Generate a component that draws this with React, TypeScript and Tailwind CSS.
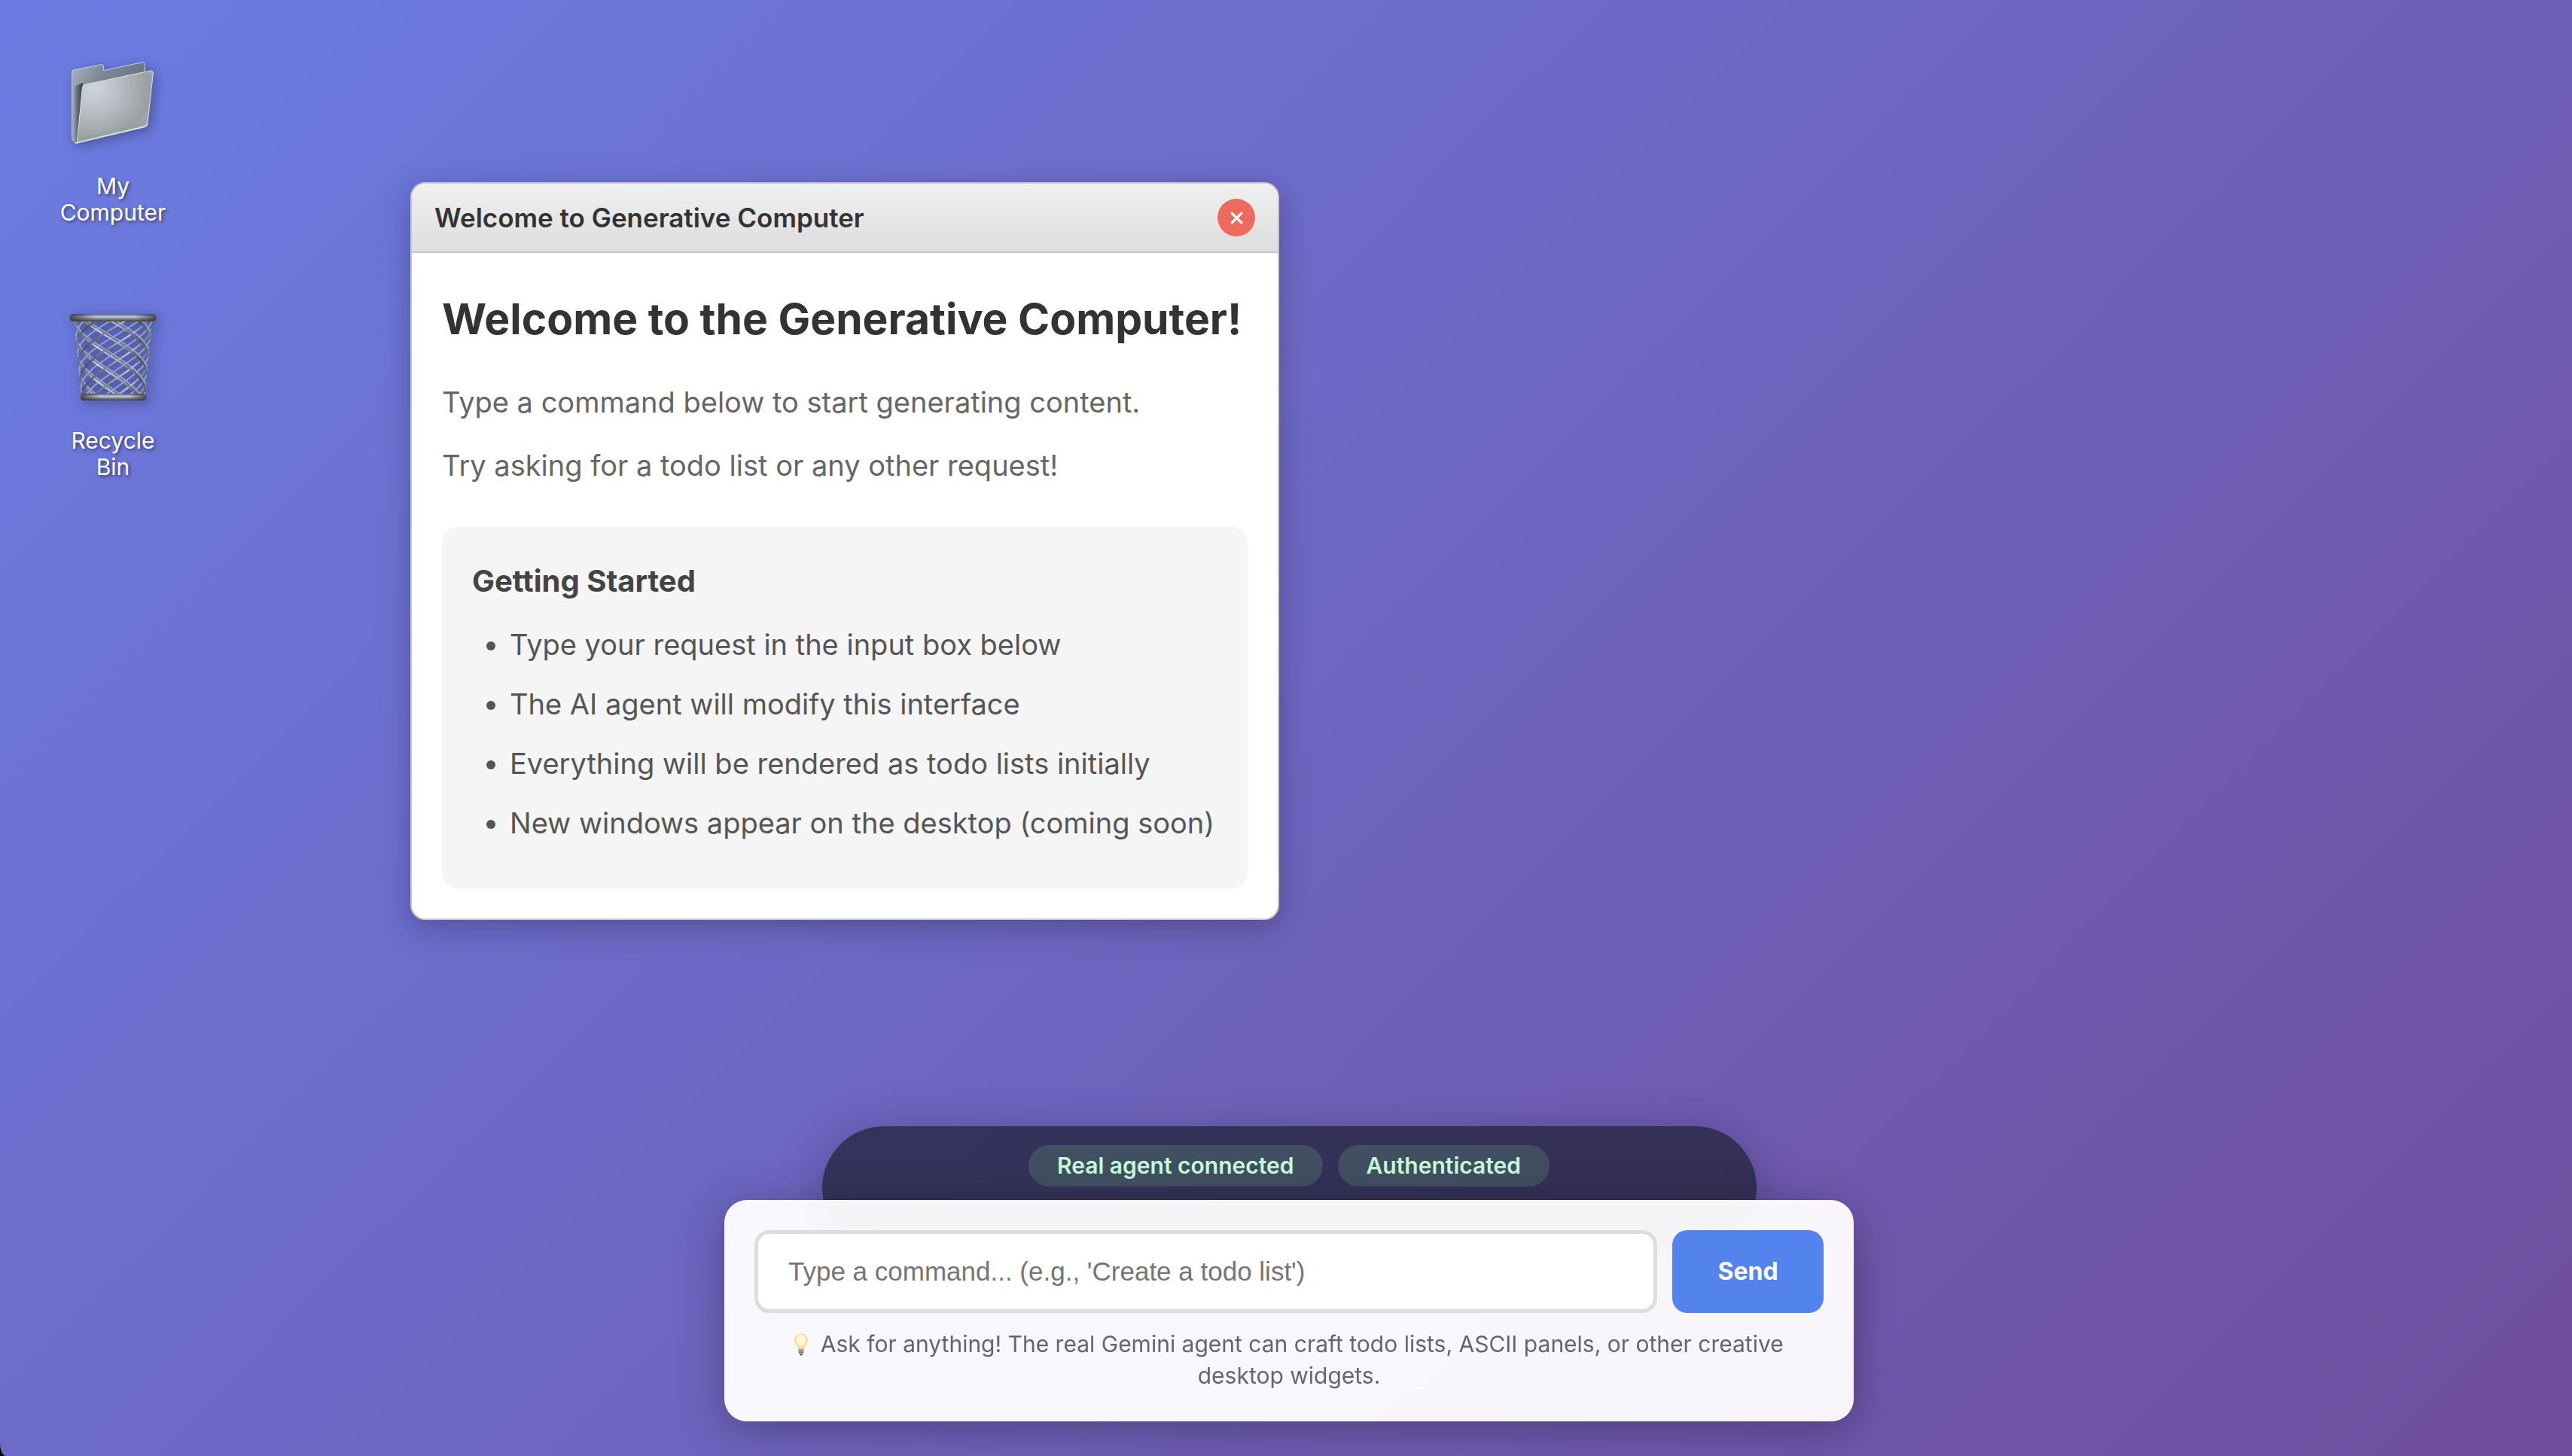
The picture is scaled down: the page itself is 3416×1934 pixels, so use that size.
import React from "react";

const tips = [
  "Type your request in the input box below",
  "The AI agent will modify this interface",
  "Everything will be rendered as todo lists initially",
  "New windows appear on the desktop (coming soon)",
];

function FolderIcon() {
  return (
    <svg viewBox="90 52 360 360" className="size-[120px] drop-shadow-[4px_4px_8px_rgba(0,0,0,0.3)]" aria-hidden="true">
      <defs>
        <linearGradient id="folder-back" x1="0" y1="0" x2="1" y2="0.6">
          <stop offset="0" stopColor="#a9b4bd" />
          <stop offset="0.35" stopColor="#7d8a96" />
          <stop offset="1" stopColor="#5d6b78" />
        </linearGradient>
        <linearGradient id="folder-fold" x1="0" y1="0" x2="1" y2="0">
          <stop offset="0" stopColor="#a5b0ba" />
          <stop offset="0.5" stopColor="#5b6772" />
          <stop offset="1" stopColor="#39434d" />
        </linearGradient>
        <radialGradient id="folder-front" cx="0.22" cy="0.25" r="0.95">
          <stop offset="0" stopColor="#d0d4de" />
          <stop offset="0.35" stopColor="#b9bec4" />
          <stop offset="0.75" stopColor="#9a9fa1" />
          <stop offset="1" stopColor="#a9acad" />
        </radialGradient>
      </defs>
      <path d="M107 108 Q107 101 114 100 L224 78 Q232 77 232 85 L233 102 L388 69 Q396 68 396 76 L398 108 L160 160 L150 280 L128 391 Q108 388 107 366 Z" fill="url(#folder-back)" stroke="#c6d0d8" strokeWidth="3" />
      <path d="M109 170 L150 150 L134 386 Q110 392 109 366 Z" fill="url(#folder-fold)" />
      <path d="M148 174 Q149 160 163 157 L421 103 Q431 102 430 114 L408 312 Q406 322 397 324 L132 388 Q127 388 128 380 Z" fill="url(#folder-front)" stroke="#dde2e8" strokeWidth="3" />
      <path d="M121 391 Q133 390 145 386 L396 327 Q405 324 407 314" fill="none" stroke="#e4e9ef" strokeWidth="4" strokeLinecap="round" />
      <path d="M140 374 L396 312" stroke="#84898b" strokeOpacity="0.5" strokeWidth="3" />
    </svg>
  );
}

// Projects one strand of the basket's mesh: a helix wound on a tapering cylinder.
function strand(turnOffset: number, direction: 1 | -1, front: boolean) {
  const top = 108;
  const bottom = 408;
  const halfTurn = 280;
  let d = "";
  let drawing = false;
  for (let y = top; y <= bottom; y += 3) {
    const t = (y - top) / (bottom - top);
    const radius = 154 - 28 * t;
    const angle = direction * ((y / halfTurn) * Math.PI + turnOffset);
    const isFront = Math.cos(angle) >= 0;
    if (isFront === front) {
      const x = 271 + radius * Math.sin(angle);
      d += `${drawing ? "L" : "M"}${x.toFixed(1)} ${y} `;
      drawing = true;
    } else {
      drawing = false;
    }
  }
  return d;
}

const strandOffsets = Array.from({ length: 8 }, (_, i) => (i * Math.PI) / 4);

function BinIcon() {
  return (
    <svg viewBox="90 78 360 360" className="size-[120px] drop-shadow-[4px_4px_8px_rgba(0,0,0,0.3)]" aria-hidden="true">
      <defs>
        <linearGradient id="bin-rim" x1="0" y1="0" x2="0" y2="1">
          <stop offset="0" stopColor="#5e6066" />
          <stop offset="0.4" stopColor="#c3cfdc" />
          <stop offset="0.6" stopColor="#8a8f98" />
          <stop offset="1" stopColor="#3f3d3f" />
        </linearGradient>
        <linearGradient id="bin-shade" x1="0" y1="0" x2="1" y2="0">
          <stop offset="0" stopColor="#3b3836" stopOpacity="0.85" />
          <stop offset="0.3" stopColor="#3b3836" stopOpacity="0" />
          <stop offset="0.75" stopColor="#3b3836" stopOpacity="0" />
          <stop offset="1" stopColor="#3b3836" stopOpacity="0.85" />
        </linearGradient>
        <linearGradient id="bin-wire" gradientUnits="userSpaceOnUse" x1="115" y1="0" x2="427" y2="0">
          <stop offset="0" stopColor="#6f86a4" />
          <stop offset="0.12" stopColor="#6f7880" />
          <stop offset="0.3" stopColor="#ccd3d6" />
          <stop offset="0.6" stopColor="#a4a7a8" />
          <stop offset="0.85" stopColor="#514d4c" />
          <stop offset="1" stopColor="#6f86a4" />
        </linearGradient>
        <linearGradient id="bin-wire-dark" gradientUnits="userSpaceOnUse" x1="115" y1="0" x2="427" y2="0">
          <stop offset="0" stopColor="#6f86a4" />
          <stop offset="0.15" stopColor="#514d4c" />
          <stop offset="0.4" stopColor="#85868a" />
          <stop offset="0.7" stopColor="#c2c8cc" />
          <stop offset="0.9" stopColor="#7b8790" />
          <stop offset="1" stopColor="#6f86a4" />
        </linearGradient>
      </defs>
      <path d="M114 108 L428 108 L398 412 L146 412 Z" fill="#4a55b0" fillOpacity="0.25" />
      <g fill="none" stroke="#94a6ba" strokeWidth="6">
        {strandOffsets.map((o) => (
          <React.Fragment key={o}>
            <path d={strand(o + 0.39, 1, false)} />
            <path d={strand(o + 0.39, -1, false)} />
          </React.Fragment>
        ))}
      </g>
      <g fill="none" strokeWidth="7">
        {strandOffsets.map((o) => (
          <React.Fragment key={o}>
            <path d={strand(o, -1, true)} stroke="url(#bin-wire-dark)" />
            <path d={strand(o + 0.25, 1, true)} stroke="url(#bin-wire)" />
          </React.Fragment>
        ))}
      </g>
      <rect x="97" y="84" width="347" height="30" rx="15" fill="url(#bin-rim)" />
      <rect x="97" y="84" width="347" height="30" rx="15" fill="url(#bin-shade)" />
      <rect x="140" y="402" width="263" height="27" rx="13" fill="url(#bin-rim)" />
      <rect x="140" y="402" width="263" height="27" rx="13" fill="url(#bin-shade)" />
    </svg>
  );
}

function BulbIcon() {
  return (
    <svg viewBox="0 0 18 30" className="mr-[8px] inline-block h-[30px] w-[18px] align-[-5px]" aria-hidden="true">
      <defs>
        <radialGradient id="bulb-glass" cx="0.5" cy="0.4" r="0.6">
          <stop offset="0" stopColor="#fffef4" />
          <stop offset="0.55" stopColor="#fdf3c0" />
          <stop offset="1" stopColor="#ecd27c" />
        </radialGradient>
      </defs>
      <path d="M9 .7C4 .7 .7 4.3 .7 9c0 4.600 4.300 7 4.800 12h7C13 16 17.300 13.600 17.300 9 17.300 4.300 14 .7 9 .7Z" fill="url(#bulb-glass)" stroke="#e6d08a" strokeWidth="0.8" />
      <path d="M5.500 21h7v5l-2 2h-3l-2-2Z" fill="#a7a39b" />
      <path d="M5.500 23.500h7M5.500 25.700h7" stroke="#77736c" strokeWidth="0.8" />
      <path d="M7 28h4l-1 1.500H8Z" fill="#3f3c39" />
    </svg>
  );
}

function DesktopIcon({ label, children }: { label: string; children: React.ReactNode }) {
  return (
    <button type="button" className="flex w-[160px] flex-col items-center gap-[33px] text-[30px] leading-[35px] text-white [text-shadow:2px_2px_4px_rgba(0,0,0,0.5)]">
      {children}
      <span className="max-w-[150px]">{label}</span>
    </button>
  );
}

function WelcomeWindow() {
  return (
    <section aria-label="Welcome to Generative Computer" className="absolute top-[242px] left-[545px] w-[1154px] overflow-hidden rounded-[20px] border-2 border-[#c8c8c8] bg-white shadow-[0_10px_40px_rgba(0,0,0,0.25)]">
      <header className="flex items-center justify-between border-b-2 border-[#c8c8c8] bg-linear-to-b from-[#f0f0f0] to-[#dedede] px-[30px] py-[20px]">
        <h2 className="text-[35px] leading-[50px] font-semibold text-[#333]">Welcome to Generative Computer</h2>
        <button type="button" aria-label="Close" className="flex size-[50px] items-center justify-center rounded-full bg-[#ed6a5e]">
          <svg viewBox="0 0 18 18" className="size-[17px]" aria-hidden="true">
            <path d="M2.500 2.500 15.500 15.500M15.500 2.500 2.500 15.500" stroke="#fff" strokeWidth="3.600" strokeLinecap="round" />
          </svg>
        </button>
      </header>
      <div className="p-[40px]">
        <h1 className="mb-[30px] text-[57px] leading-[96px] font-bold text-[#333]">Welcome to the Generative Computer!</h1>
        <p className="mb-[20px] text-[38px] leading-[64px] text-[#666]">Type a command below to start generating content.</p>
        <p className="mb-[50px] text-[38px] leading-[64px] text-[#666]">Try asking for a todo list or any other request!</p>
        <div className="rounded-[20px] bg-[#f5f5f5] p-[40px]">
          <h3 className="mb-[20px] text-[40px] leading-[64px] font-bold text-[#444]">Getting Started</h3>
          <ul className="list-disc pl-[50px] text-[38px] leading-[64px] text-[#555]">
            {tips.map((tip) => (
              <li key={tip} className="mb-[15px]">{tip}</li>
            ))}
          </ul>
        </div>
      </div>
    </section>
  );
}

function StatusBar() {
  return (
    <div className="-mb-[66px] flex h-[164px] w-[1241px] max-w-full items-start justify-center gap-[20px] rounded-full bg-[#1b1e31]/70 pt-[25px] text-[30px] leading-[55px] font-semibold text-[#c5fbd8] shadow-[0_10px_60px_rgba(0,0,0,0.25)]">
      <span className="rounded-full bg-[#80d884]/18 px-[38px]">Real agent connected</span>
      <span className="rounded-full bg-[#80d884]/18 px-[38px]">Authenticated</span>
    </div>
  );
}

function CommandPanel() {
  return (
    <form className="relative w-[1500px] max-w-full rounded-[30px] bg-white/95 p-[40px] shadow-[0_10px_60px_rgba(0,0,0,0.3)] backdrop-blur-[20px]" onSubmit={(e) => e.preventDefault()}>
      <div className="flex gap-[20px]">
        <input
          type="text"
          aria-label="Command"
          placeholder="Type a command... (e.g., 'Create a todo list')"
          className="h-[110px] min-w-0 flex-1 rounded-[20px] border-[5px] border-[#ddd] bg-white px-[40px] font-['Liberation_Sans',Arial,sans-serif] text-[35px] text-[#333] placeholder:text-[#757575]"
        />
        <button type="submit" className="w-[201px] rounded-[20px] bg-[#5383ec] text-[32px] font-bold text-white">Send</button>
      </div>
      <p className="mt-[20px] text-center text-[30px] leading-[42px] text-[#666]">
        <BulbIcon />{" "}
        Ask for anything! The real Gemini agent can craft todo lists, ASCII panels, or other creative desktop widgets.
      </p>
    </form>
  );
}

export default function App() {
  return (
    <div className="bg-black">
      <main className="relative flex min-h-screen flex-col justify-between overflow-hidden bg-linear-[135deg] from-[#6b7de3] to-[#704d9d] font-['Inter',sans-serif] [border-bottom-left-radius:8px_16px]">
        <nav aria-label="Desktop" className="flex flex-col gap-[115px] pt-[77px] pl-[70px]">
          <DesktopIcon label="My Computer"><FolderIcon /></DesktopIcon>
          <DesktopIcon label="Recycle Bin"><BinIcon /></DesktopIcon>
        </nav>
        <WelcomeWindow />
        <footer className="flex flex-col items-center pb-[46px] pl-[8px]">
          <StatusBar />
          <CommandPanel />
        </footer>
      </main>
    </div>
  );
}
